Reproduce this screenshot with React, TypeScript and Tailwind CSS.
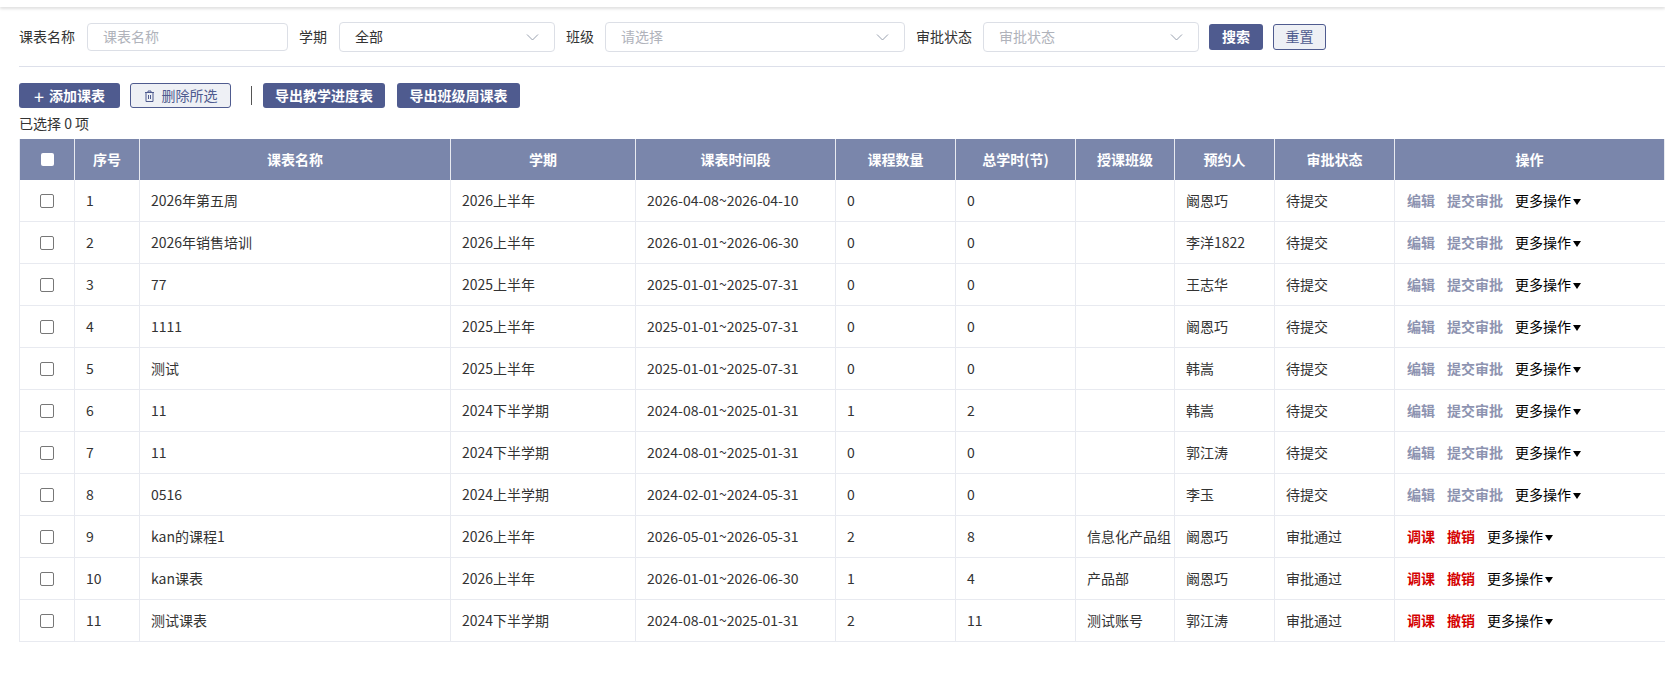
import React from "react";

const rows = [
  ["1","2026年第五周","2026上半年","2026-04-08~2026-04-10","0","0","","阚恩巧","待提交"],
  ["2","2026年销售培训","2026上半年","2026-01-01~2026-06-30","0","0","","李洋1822","待提交"],
  ["3","77","2025上半年","2025-01-01~2025-07-31","0","0","","王志华","待提交"],
  ["4","1111","2025上半年","2025-01-01~2025-07-31","0","0","","阚恩巧","待提交"],
  ["5","测试","2025上半年","2025-01-01~2025-07-31","0","0","","韩嵩","待提交"],
  ["6","11","2024下半学期","2024-08-01~2025-01-31","1","2","","韩嵩","待提交"],
  ["7","11","2024下半学期","2024-08-01~2025-01-31","0","0","","郭江涛","待提交"],
  ["8","0516","2024上半学期","2024-02-01~2024-05-31","0","0","","李玉","待提交"],
  ["9","kan的课程1","2026上半年","2026-05-01~2026-05-31","2","8","信息化产品组","阚恩巧","审批通过"],
  ["10","kan课表","2026上半年","2026-01-01~2026-06-30","1","4","产品部","阚恩巧","审批通过"],
  ["11","测试课表","2024下半学期","2024-08-01~2025-01-31","2","11","测试账号","郭江涛","审批通过"],
];
const widths = [55,65,311,185,200,120,120,99,100,120];
const heads = ["序号","课表名称","学期","课表时间段","课程数量","总学时(节)","授课班级","预约人","审批状态","操作"];

const Chevron = () => (
  <svg width="13" height="8" viewBox="0 0 13 8" className="text-gray-400"><path d="M1 1.5l5.5 5.5 5.5-5.5" fill="none" stroke="currentColor" strokeWidth="1"/></svg>
);
const Select = ({ w, text, ph }: { w: number; text: string; ph?: boolean }) => (
  <div className="h-[30px] border border-[#dcdfe6] rounded flex items-center justify-between px-[15px]" style={{ width: w }}>
    <span className={ph ? "text-[#b0b3bb]" : "text-[#333]"}>{text}</span>
    <Chevron />
  </div>
);
const Caret = () => <span className="inline-block ml-[2px] w-0 h-0 border-l-[4px] border-r-[4px] border-t-[6px] border-l-transparent border-r-transparent border-t-black align-middle" />;

export default function App() {
  return (
    <div className="w-[1665px] h-[698px] bg-white text-[14px] text-[#333] overflow-hidden" style={{ fontFamily: '"Microsoft YaHei","Noto Sans CJK SC",sans-serif' }}>
      <div className="h-[7px] shadow-[0_2px_3px_rgba(0,0,0,0.12)]" />
      <div className="flex items-center h-[59px] pl-[19px]">
        <span className="mr-[12px]">课表名称</span>
        <div className="w-[201px] h-[28px] border border-[#dcdfe6] rounded flex items-center px-[15px] text-[#b0b3bb]">课表名称</div>
        <span className="ml-[11px] mr-[12px]">学期</span>
        <Select w={216} text="全部" />
        <span className="ml-[11px] mr-[11px]">班级</span>
        <Select w={300} text="请选择" ph />
        <span className="ml-[11px] mr-[11px]">审批状态</span>
        <Select w={216} text="审批状态" ph />
        <button className="ml-[10px] w-[54px] h-[26px] rounded-[3px] bg-[#4f5b8f] text-white font-bold">搜索</button>
        <button className="ml-[10px] w-[53px] h-[26px] rounded-[3px] bg-[#eef0f5] border border-[#4f5b8f] text-[#4f5b8f]">重置</button>
      </div>
      <div className="ml-[19px] border-t border-[#dde0ea]" />
      <div className="flex items-center pl-[19px] mt-[16px] h-[25px]">
        <button className="w-[101px] h-[25px] rounded-[3px] bg-[#4f5b8f] text-white font-bold flex items-center justify-center gap-[5px]"><span className="text-[18px] font-normal leading-none">+</span>添加课表</button>
        <button className="ml-[10px] w-[101px] h-[25px] rounded-[3px] bg-[#eef0f5] border border-[#4f5b8f] text-[#4f5b8f] flex items-center justify-center gap-[7px]">
          <svg width="11" height="12" viewBox="0 0 11 12"><path d="M1 2.5h9M4 2.5V1h3v1.5M2 2.5v9h7v-9M4.5 5v4M6.5 5v4" fill="none" stroke="currentColor"/></svg>删除所选
        </button>
        <div className="ml-[20px] w-px h-[19px] bg-[#555]" />
        <button className="ml-[11px] w-[122px] h-[25px] rounded-[3px] bg-[#4f5b8f] text-white font-bold">导出教学进度表</button>
        <button className="ml-[12px] w-[123px] h-[25px] rounded-[3px] bg-[#4f5b8f] text-white font-bold">导出班级周课表</button>
      </div>
      <div className="pl-[19px] h-[31px] flex items-center">已选择 0 项</div>
      <div className="ml-[19px] flex text-white font-bold bg-[#7a86ab] h-[41px] border-l border-[#e8eaf0]">
        {["", ...heads].map((h, i) => (
          <div key={i} className={`flex items-center justify-center border-r border-[#e8eaf0] ${i === 10 ? "flex-1" : ""}`} style={i === 10 ? {} : { width: i === 0 ? 55 : widths[i] }}>
            {i === 0 ? <div className="w-[13px] h-[13px] bg-white rounded-[2px]" /> : h}
          </div>
        ))}
      </div>
      {rows.map((r) => {
        const ok = r[8] === "审批通过";
        return (
          <div key={r[0]} className="ml-[19px] flex h-[42px] border-b border-l border-[#e8eaf0]">
            <div className="w-[55px] flex items-center justify-center border-r border-[#e8eaf0]"><div className="w-[14px] h-[14px] border border-[#777] rounded-[2px]" /></div>
            {r.map((c, j) => (
              <div key={j} className="flex items-center px-[11px] border-r border-[#e8eaf0] whitespace-nowrap" style={{ width: widths[j + 1] }}>{c}</div>
            ))}
            <div className="flex-1 flex items-center px-[12px] gap-[12px] font-bold">
              {ok ? (<><span className="text-[#d40000]">调课</span><span className="text-[#d40000]">撤销</span></>) : (<><span className="text-[#8d93b0]">编辑</span><span className="text-[#8d93b0]">提交审批</span></>)}
              <span className="font-normal text-black">更多操作<Caret /></span>
            </div>
          </div>
        );
      })}
    </div>
  );
}
